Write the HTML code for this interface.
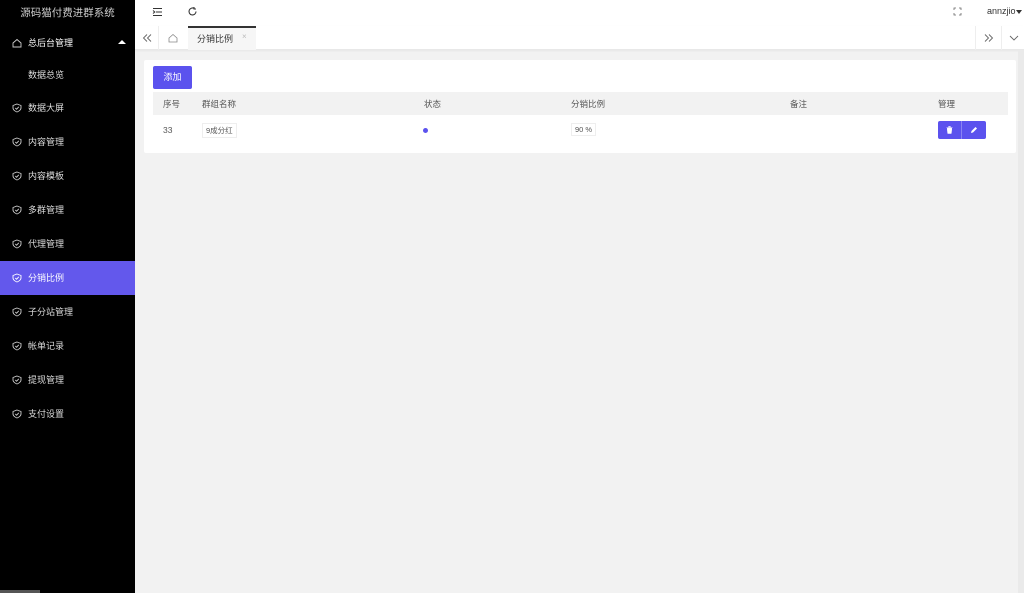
<!DOCTYPE html>
<html><head><meta charset="utf-8"><style>
*{margin:0;padding:0;box-sizing:border-box}
body{width:1024px;height:593px;overflow:hidden;font-family:"Liberation Sans","Noto Sans CJK SC",sans-serif;font-size:9px;color:#333;background:#f2f2f2;position:relative}
.side{position:absolute;left:0;top:0;width:135px;height:593px;background:#000;color:#ddd}
.logo{position:absolute;top:5px;left:0;width:135px;text-align:center;font-size:10.5px;color:#ccc}
.mi{position:absolute;left:0;width:135px;height:34px;line-height:34px;padding-left:28px;font-size:9px;color:#ddd}
.mi svg{position:absolute;left:12px;top:12px}
.mi.act{background:#6358ec;color:#fff}
.hdr{position:absolute;left:135px;top:0;right:0;height:26px;background:#fff}
.tabs{position:absolute;left:135px;top:26px;right:0;height:24px;background:#fff;border-bottom:1px solid #e8e8e8;box-shadow:0 1px 2px rgba(0,0,0,.05)}
.card{position:absolute;left:144px;top:60px;width:872px;height:93px;background:#fff;border-radius:2px}
.btn{position:absolute;left:9px;top:6px;width:39px;height:23px;background:#5b52ee;color:#fff;border-radius:2px;text-align:center;line-height:23px;font-size:9px}
.th{position:absolute;left:9px;top:32px;width:855px;height:23px;background:#f2f2f2}
.t{position:absolute;font-size:8.5px;color:#555}
.tag{position:absolute;border:1px solid #eee;padding:1px 3px;font-size:7.5px;color:#555;background:#fff}
</style></head><body>
<div class="side">
<div class="logo">源码猫付费进群系统</div>
<div class="mi" style="top:26px;color:#fff"><svg width="10" height="10" viewBox="0 0 10 10"><path d="M1 5L5 1.5 9 5V9H1Z" fill="none" stroke="#ccc" stroke-width="0.9"/></svg>总后台管理<span style="position:absolute;left:118px;top:14px;border-left:4px solid transparent;border-right:4px solid transparent;border-bottom:4px solid #fff"></span></div>
<div class="mi" style="top:58px">数据总览</div>
<div class="mi" style="top:91px"><svg width="10" height="10" viewBox="0 0 10 10"><path d="M5 1L9 2.5V5C9 7.5 5 9 5 9S1 7.5 1 5V2.5Z M3.3 5L4.6 6.2 6.8 3.8" fill="none" stroke="#ccc" stroke-width="0.9"/></svg>数据大屏</div>
<div class="mi" style="top:125px"><svg width="10" height="10" viewBox="0 0 10 10"><path d="M5 1L9 2.5V5C9 7.5 5 9 5 9S1 7.5 1 5V2.5Z M3.3 5L4.6 6.2 6.8 3.8" fill="none" stroke="#ccc" stroke-width="0.9"/></svg>内容管理</div>
<div class="mi" style="top:159px"><svg width="10" height="10" viewBox="0 0 10 10"><path d="M5 1L9 2.5V5C9 7.5 5 9 5 9S1 7.5 1 5V2.5Z M3.3 5L4.6 6.2 6.8 3.8" fill="none" stroke="#ccc" stroke-width="0.9"/></svg>内容模板</div>
<div class="mi" style="top:193px"><svg width="10" height="10" viewBox="0 0 10 10"><path d="M5 1L9 2.5V5C9 7.5 5 9 5 9S1 7.5 1 5V2.5Z M3.3 5L4.6 6.2 6.8 3.8" fill="none" stroke="#ccc" stroke-width="0.9"/></svg>多群管理</div>
<div class="mi" style="top:227px"><svg width="10" height="10" viewBox="0 0 10 10"><path d="M5 1L9 2.5V5C9 7.5 5 9 5 9S1 7.5 1 5V2.5Z M3.3 5L4.6 6.2 6.8 3.8" fill="none" stroke="#ccc" stroke-width="0.9"/></svg>代理管理</div>
<div class="mi act" style="top:261px"><svg width="10" height="10" viewBox="0 0 10 10"><path d="M5 1L9 2.5V5C9 7.5 5 9 5 9S1 7.5 1 5V2.5Z M3.3 5L4.6 6.2 6.8 3.8" fill="none" stroke="#fff" stroke-width="0.9"/></svg>分销比例</div>
<div class="mi" style="top:295px"><svg width="10" height="10" viewBox="0 0 10 10"><path d="M5 1L9 2.5V5C9 7.5 5 9 5 9S1 7.5 1 5V2.5Z M3.3 5L4.6 6.2 6.8 3.8" fill="none" stroke="#ccc" stroke-width="0.9"/></svg>子分站管理</div>
<div class="mi" style="top:329px"><svg width="10" height="10" viewBox="0 0 10 10"><path d="M5 1L9 2.5V5C9 7.5 5 9 5 9S1 7.5 1 5V2.5Z M3.3 5L4.6 6.2 6.8 3.8" fill="none" stroke="#ccc" stroke-width="0.9"/></svg>帐单记录</div>
<div class="mi" style="top:363px"><svg width="10" height="10" viewBox="0 0 10 10"><path d="M5 1L9 2.5V5C9 7.5 5 9 5 9S1 7.5 1 5V2.5Z M3.3 5L4.6 6.2 6.8 3.8" fill="none" stroke="#ccc" stroke-width="0.9"/></svg>提现管理</div>
<div class="mi" style="top:397px"><svg width="10" height="10" viewBox="0 0 10 10"><path d="M5 1L9 2.5V5C9 7.5 5 9 5 9S1 7.5 1 5V2.5Z M3.3 5L4.6 6.2 6.8 3.8" fill="none" stroke="#ccc" stroke-width="0.9"/></svg>支付设置</div>
<div style="position:absolute;left:0;top:590px;width:40px;height:3px;background:#555"></div>
</div>
<div class="hdr">
<svg style="position:absolute;left:17px;top:7px" width="11" height="10" viewBox="0 0 11 10"><path d="M1 1.5H10M4 5H10M1 8.5H10M1 3.5L2.8 5 1 6.5" fill="none" stroke="#333" stroke-width="1"/></svg>
<svg style="position:absolute;left:52px;top:6px" width="11" height="11" viewBox="0 0 11 11"><path d="M9 5.5A3.5 3.5 0 1 1 7.5 2.6M7 1V3H9" fill="none" stroke="#333" stroke-width="1.1"/></svg>
<svg style="position:absolute;left:818px;top:7px" width="9" height="9" viewBox="0 0 9 9"><path d="M1 3V1H3M6 1H8V3M8 6V8H6M3 8H1V6" fill="none" stroke="#666" stroke-width="0.8"/></svg>
<span style="position:absolute;left:852px;top:6px;font-size:9px;color:#333">annzjio</span>
<span style="position:absolute;left:881px;top:10px;border-left:3.5px solid transparent;border-right:3.5px solid transparent;border-top:4px solid #333"></span>
</div>
<div class="tabs">
<svg style="position:absolute;left:7px;top:8px" width="10" height="8" viewBox="0 0 10 8"><path d="M5 0.5L1.5 4 5 7.5M9 0.5L5.5 4 9 7.5" fill="none" stroke="#666" stroke-width="0.9"/></svg>
<div style="position:absolute;left:23px;top:0;width:1px;height:24px;background:#eee"></div>
<svg style="position:absolute;left:33px;top:7px" width="10" height="10" viewBox="0 0 10 10"><path d="M1 5L5 1.5 9 5V9H1Z" fill="none" stroke="#888" stroke-width="0.8"/></svg>
<div style="position:absolute;left:53px;top:0;width:68px;height:24px;background:#f6f6f6;border-top:2px solid #333"></div>
<span style="position:absolute;left:62px;top:6px;font-size:9px;color:#333">分销比例</span>
<span style="position:absolute;left:107px;top:6px;font-size:8px;color:#bbb">×</span>
<div style="position:absolute;left:840px;top:0;width:1px;height:24px;background:#eee"></div>
<svg style="position:absolute;left:849px;top:8px" width="10" height="8" viewBox="0 0 10 8"><path d="M1 0.5L4.5 4 1 7.5M5 0.5L8.5 4 5 7.5" fill="none" stroke="#666" stroke-width="0.9"/></svg>
<div style="position:absolute;left:866px;top:0;width:1px;height:24px;background:#eee"></div>
<svg style="position:absolute;left:874px;top:9px" width="10" height="6" viewBox="0 0 10 6"><path d="M1 1L5 5 9 1" fill="none" stroke="#666" stroke-width="0.9"/></svg>
</div>
<div class="card">
<div class="btn">添加</div>
<div class="th"></div>
<span class="t" style="left:19px;top:38px">序号</span>
<span class="t" style="left:58px;top:38px">群组名称</span>
<span class="t" style="left:280px;top:38px">状态</span>
<span class="t" style="left:427px;top:38px">分销比例</span>
<span class="t" style="left:646px;top:38px">备注</span>
<span class="t" style="left:794px;top:38px">管理</span>
<span class="t" style="left:19px;top:65px">33</span>
<span class="tag" style="left:58px;top:63px">9成分红</span>
<span style="position:absolute;left:279px;top:68px;width:5px;height:5px;border-radius:50%;background:#5b52ee"></span>
<span class="tag" style="left:427px;top:63px">90 %</span>
<div style="position:absolute;left:794px;top:61px;width:48px;height:18px;background:#5b52ee;border-radius:2px"></div>
<div style="position:absolute;left:817px;top:61px;width:1px;height:18px;background:#8a83f3"></div>
<svg style="position:absolute;left:802px;top:66px" width="7" height="8" viewBox="0 0 7 8"><path d="M0.5 1.5H6.5M2.5 1.5V0.5H4.5V1.5M1.2 2.3H5.8L5.3 7.5H1.7Z" fill="#fff" stroke="#fff" stroke-width="0.5"/></svg>
<svg style="position:absolute;left:826px;top:66px" width="8" height="8" viewBox="0 0 8 8"><path d="M1 7L1.5 5 5.5 1 7 2.5 3 6.5Z" fill="#fff"/></svg>
</div>
<div style="position:absolute;right:0;top:50px;width:6px;height:543px;background:#eaeaea"></div>
</body></html>
